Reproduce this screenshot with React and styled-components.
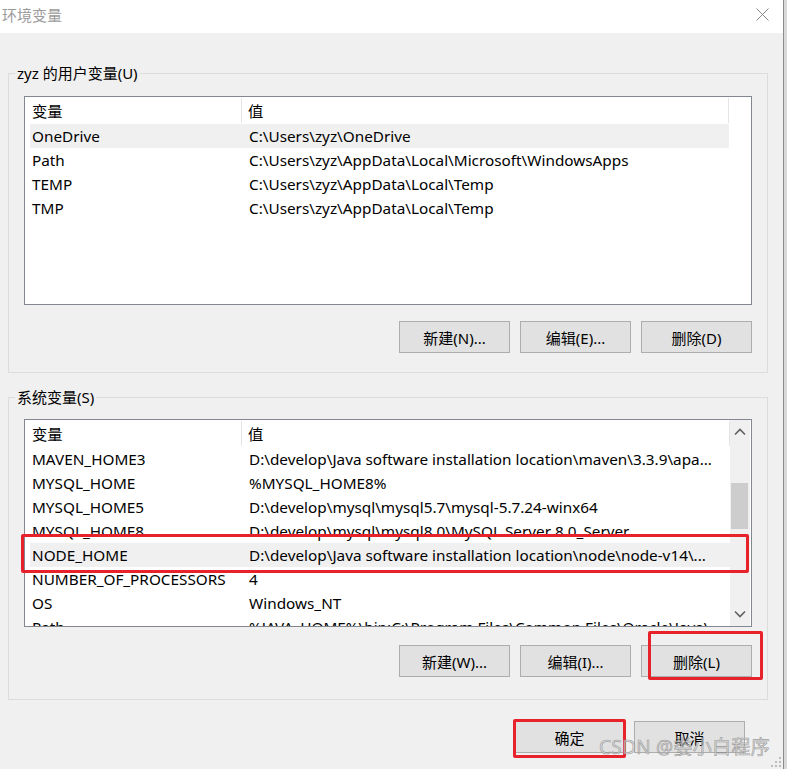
import React from 'react'
import styled, { createGlobalStyle } from 'styled-components'

const GlobalStyle = createGlobalStyle`
  html, body {
    margin: 0;
    padding: 0;
    background: #d9d9d9;
  }
  body {
    font-family: "Noto Sans", "Noto Sans CJK SC", sans-serif;
    font-size: 15px;
    color: #000;
  }
`

const Window = styled.div`
  position: relative;
  width: 783px;
  height: 769px;
  border-right: 1px solid #8c8c8c;
  background: #f0f0f0;
  display: flex;
  flex-direction: column;
  overflow: hidden;
`

const TitleBar = styled.div`
  height: 33px;
  background: #fff;
  display: flex;
  align-items: center;
  justify-content: space-between;
  padding: 0 14px 4px 2px;
  box-sizing: border-box;
`

const Title = styled.div`
  color: #9c9c9c;
  font-size: 15px;
`

const Body = styled.div`
  padding: 30px 15px 0 8px;
  display: flex;
  flex-direction: column;
`

const Group = styled.fieldset`
  margin: ${p => (p.$second ? '14px' : '0')} 0 0 0;
  padding: 0 15px ${p => (p.$second ? '22px' : '19px')} 15px;
  border: 1px solid #dcdcdc;
  min-width: 0;
  display: flex;
  flex-direction: column;
`

const Legend = styled.legend`
  margin-left: -9px;
  padding: 0 2px;
  line-height: 20px;
  font-size: 15px;
`

const ListWrap = styled.div`
  position: relative;
  margin-top: ${p => (p.$second ? '12px' : '13px')};
`

const ListBox = styled.div`
  height: ${p => p.$height}px;
  border: 1px solid #828790;
  background: #fff;
  display: flex;
  overflow: hidden;
  font-size: 15.3px;
`

const ListContent = styled.div`
  flex: 1;
  min-width: 0;
  overflow: hidden;
`

const Header = styled.div`
  display: grid;
  grid-template-columns: 217px 1fr;
  height: 27px;
`

const HeadCell = styled.div`
  padding-left: ${p => (p.$first ? '7px' : '6px')};
  border-right: 1px solid #e5e5e5;
  line-height: 26px;
  height: 25px;
  margin-top: 1px;
`

const Row = styled.div`
  display: grid;
  grid-template-columns: 212px 1fr;
  margin-left: 5px;
  height: 24px;
  line-height: 24px;
  background: ${p => (p.$selected ? '#f0f0f0' : 'transparent')};
  white-space: nowrap;
`

const NameCell = styled.div`
  padding-left: 2px;
  overflow: hidden;
`

const ValueCell = styled.div`
  padding-left: 7px;
  overflow: hidden;
  text-overflow: ellipsis;
`

const Spacer = styled.div`
  width: 22px;
  flex: none;
`

const ScrollBar = styled.div`
  width: 20px;
  margin-right: 1px;
  flex: none;
  background: #f0f0f0;
  display: flex;
  flex-direction: column;
  align-items: center;
`

const ScrollArrow = styled.div`
  height: 24px;
  width: 100%;
  display: flex;
  align-items: center;
  justify-content: center;
`

const ScrollTrack = styled.div`
  flex: 1;
  width: 100%;
  padding-top: 39px;
  box-sizing: border-box;
`

const Thumb = styled.div`
  width: 17px;
  margin-left: 1px;
  height: 46px;
  background: #cdcdcd;
`

const ButtonRow = styled.div`
  display: flex;
  justify-content: flex-end;
  gap: ${p => p.$gap || 10}px;
  margin-top: ${p => p.$top}px;
  margin-right: ${p => p.$right || 0}px;
`

const Button = styled.div`
  position: relative;
  width: 111px;
  height: 32px;
  box-sizing: border-box;
  border: 1px solid #adadad;
  background: #e1e1e1;
  display: flex;
  align-items: center;
  justify-content: center;
  font-size: 15px;
`

const Mark = styled.div`
  position: absolute;
  box-sizing: border-box;
  border: 3px solid #e8222b;
  border-radius: 2px;
  pointer-events: none;
`

const Watermark = styled.div`
  position: absolute;
  right: 13px;
  bottom: 9px;
  font-size: 19px;
  color: rgba(215, 215, 215, 0.7);
  -webkit-text-stroke: 0.6px rgba(120, 120, 120, 0.7);
  letter-spacing: 0.3px;
  pointer-events: none;
`

const Grip = styled.svg`
  position: absolute;
  right: 1px;
  bottom: 1px;
`

const Close = () => (
  <svg width="13" height="13" viewBox="0 0 13 13">
    <path d="M0.5 0.5 L12.5 12.5 M12.5 0.5 L0.5 12.5" stroke="#8a8a8a" strokeWidth="1" fill="none" />
  </svg>
)

const Chevron = ({ down }) => (
  <svg width="12" height="8" viewBox="0 0 12 8">
    <path
      d={down ? 'M1 1.5 L6 6.5 L11 1.5' : 'M1 6.5 L6 1.5 L11 6.5'}
      stroke="#606060"
      strokeWidth="1.6"
      fill="none"
    />
  </svg>
)

const userVars = [
  ['OneDrive', 'C:\\Users\\zyz\\OneDrive'],
  ['Path', 'C:\\Users\\zyz\\AppData\\Local\\Microsoft\\WindowsApps'],
  ['TEMP', 'C:\\Users\\zyz\\AppData\\Local\\Temp'],
  ['TMP', 'C:\\Users\\zyz\\AppData\\Local\\Temp'],
]

const sysVars = [
  ['MAVEN_HOME3', 'D:\\develop\\Java software installation location\\maven\\3.3.9\\apa...'],
  ['MYSQL_HOME', '%MYSQL_HOME8%'],
  ['MYSQL_HOME5', 'D:\\develop\\mysql\\mysql5.7\\mysql-5.7.24-winx64'],
  ['MYSQL_HOME8', 'D:\\develop\\mysql\\mysql8.0\\MySQL Server 8.0_Server'],
  ['NODE_HOME', 'D:\\develop\\Java software installation location\\node\\node-v14\\...'],
  ['NUMBER_OF_PROCESSORS', '4'],
  ['OS', 'Windows_NT'],
  ['Path', '%JAVA_HOME%\\bin;C:\\Program Files\\Common Files\\Oracle\\Java\\...'],
]

const VarList = ({ rows, selected, height, scroll }) => (
  <ListBox $height={height}>
    <ListContent>
      <Header>
        <HeadCell $first>变量</HeadCell>
        <HeadCell>值</HeadCell>
      </Header>
      {rows.map(([name, value]) => (
        <Row key={name} $selected={name === selected}>
          <NameCell>{name}</NameCell>
          <ValueCell>{value}</ValueCell>
        </Row>
      ))}
    </ListContent>
    {scroll ? (
      <ScrollBar>
        <ScrollArrow><Chevron /></ScrollArrow>
        <ScrollTrack><Thumb /></ScrollTrack>
        <ScrollArrow><Chevron down /></ScrollArrow>
      </ScrollBar>
    ) : (
      <Spacer />
    )}
  </ListBox>
)

const App = () => {
  return (
    <>
      <GlobalStyle />
      <Window>
        <TitleBar>
          <Title>环境变量</Title>
          <Close />
        </TitleBar>
        <Body>
          <Group>
            <Legend>zyz 的用户变量(U)</Legend>
            <ListWrap>
              <VarList rows={userVars} selected='OneDrive' height={207} />
            </ListWrap>
            <ButtonRow $top={16}>
              <Button>新建(N)...</Button>
              <Button>编辑(E)...</Button>
              <Button>删除(D)</Button>
            </ButtonRow>
          </Group>
          <Group $second>
            <Legend>系统变量(S)</Legend>
            <ListWrap $second>
              <VarList rows={sysVars} selected='NODE_HOME' height={206} scroll />
              <Mark style={{ left: -3, top: 115, width: 728, height: 39 }} />
            </ListWrap>
            <ButtonRow $top={18}>
              <Button>新建(W)...</Button>
              <Button>编辑(I)...</Button>
              <Button>
                删除(L)
                <Mark style={{ left: 6, top: -15, width: 115, height: 49 }} />
              </Button>
            </ButtonRow>
          </Group>
          <ButtonRow $top={21} $gap={9} $right={23}>
            <Button>
              确定
              <Mark style={{ left: -2, top: -3, width: 113, height: 39 }} />
            </Button>
            <Button>取消</Button>
          </ButtonRow>
        </Body>
        <Watermark>CSDN @娄小白程序</Watermark>
        <Grip width="12" height="12" viewBox="0 0 12 12">
          {[[10, 2], [10, 6], [6, 6], [10, 10], [6, 10], [2, 10]].map(([x, y]) => (
            <rect key={`${x}-${y}`} x={x - 1} y={y - 1} width="2" height="2" fill="#bdbdbd" />
          ))}
        </Grip>
      </Window>
    </>
  )
}

export default App
